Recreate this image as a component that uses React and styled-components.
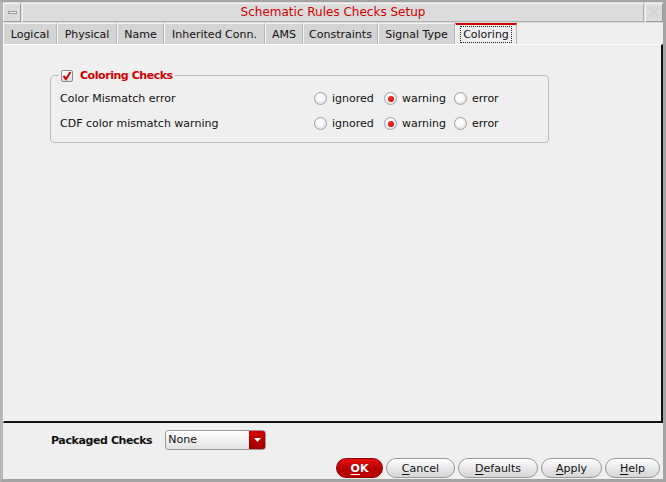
import React from "react";
import styled, { createGlobalStyle } from "styled-components";

const Global = createGlobalStyle`
  html, body { margin: 0; padding: 0; background: #efefef; }
  * { box-sizing: border-box; }
  body { font-family: "DejaVu Sans", Verdana, sans-serif; font-size: 11px; color: #111; }
`;

const Window = styled.div`
  width: 666px;
  height: 482px;
  display: flex;
  flex-direction: column;
  background: #efefef;
  border-style: solid;
  border-color: #a4a4a4;
  border-width: 2px 3px 3px 3px;
  border-left-color: #b6b6b6;
`;

const TitleBar = styled.div`
  height: 21px;
  display: flex;
  align-items: center;
  gap: 1px;
  padding: 0 0 1px 0;
  background: #dcdcdc;
`;

const FrameBtn = styled.div`
  width: 18px;
  height: 19px;
  display: flex;
  align-items: center;
  justify-content: center;
  border: 1px solid;
  border-color: #f6f6f6 #9c9c9c #9c9c9c #f6f6f6;
  background: #dcdcdc;
`;

const Dash = styled.div`
  width: 9px;
  height: 3px;
  border: 1px solid #9a9a9a;
  background: #f2f2f2;
`;

const Caption = styled.div`
  flex: 1;
  height: 19px;
  display: flex;
  align-items: center;
  justify-content: center;
  border: 1px solid;
  border-color: #f4f4f4 #b0b0b0 #b0b0b0 #f4f4f4;
  color: #d00000;
  font-size: 12px;
`;

const TabRow = styled.div`
  height: 21px;
  display: flex;
  align-items: stretch;
`;

const Tab = styled.div`
  width: ${(p) => p.$w}px;
  display: flex;
  align-items: center;
  justify-content: center;
  background: ${(p) => (p.$active ? "#efefef" : "#d4d4d4")};
  border-left: 1px solid #f8f8f8;
  border-right: 1px solid #b4b4b4;
  border-top: ${(p) => (p.$active ? "2px solid #cc0000" : "1px solid #f4f4f4")};
  font-size: 11px;
  color: #111;
`;

const TabText = styled.span`
  padding: 1px 2px;
  border: 1px dotted ${(p) => (p.$focus ? "#222" : "transparent")};
`;

const Panel = styled.div`
  flex: 1;
  border-top: 1px solid #ffffff;
  border-left: 1px solid #f8f8f8;
  border-right: 2px solid #111;
  border-bottom: 2px solid #111;
  padding: 24px 0 0 46px;
`;

const Group = styled.fieldset`
  width: 499px;
  margin: 0;
  padding: 4px 0 6px 9px;
  border: 1px solid #bcbcbc;
  border-radius: 4px;
`;

const Legend = styled.legend`
  margin-left: -1px;
  padding: 0 2px;
  display: flex;
  align-items: center;
  gap: 7px;
  height: 13px;
  color: #d00000;
  font-weight: bold;
  font-size: 11px;
  letter-spacing: -0.45px;
`;

const CheckBox = styled.span`
  width: 12px;
  height: 12px;
  border: 1px solid #8c8c8c;
  border-radius: 2px;
  background: linear-gradient(#ffffff, #dcdcdc);
  display: flex;
  align-items: center;
  justify-content: center;
`;

const Row = styled.div`
  height: 25px;
  display: grid;
  grid-template-columns: 254px auto;
  align-items: center;
`;

const Options = styled.div`
  display: flex;
  align-items: center;
`;

const Option = styled.label`
  width: 70px;
  display: flex;
  align-items: center;
  gap: 5px;
`;

const Radio = styled.span`
  width: 13px;
  height: 13px;
  border-radius: 50%;
  border: 1px solid #a2a2a2;
  background: radial-gradient(circle at 45% 40%, #ffffff 30%, #d2d2d2 100%);
  display: flex;
  align-items: center;
  justify-content: center;
  &::after {
    content: "";
    width: 6px;
    height: 6px;
    border-radius: 50%;
    background: ${(p) => (p.$on ? "radial-gradient(circle at 40% 35%, #ff3030, #b00000)" : "transparent")};
  }
`;

const Footer = styled.div`
  height: 56px;
  display: flex;
  flex-direction: column;
  padding-top: 7px;
`;

const PkgRow = styled.div`
  display: flex;
  align-items: center;
  gap: 13px;
  padding-left: 48px;
  height: 20px;
`;

const PkgLabel = styled.span`
  font-weight: bold;
  font-size: 11px;
  letter-spacing: -0.4px;
`;

const Combo = styled.div`
  width: 101px;
  height: 20px;
  display: flex;
  border: 1px solid #9a9a9a;
  border-radius: 3px;
  overflow: hidden;
  background: linear-gradient(#ffffff, #e2e2e2);
`;

const ComboText = styled.span`
  flex: 1;
  padding-left: 2px;
  line-height: 17px;
  font-size: 11px;
`;

const ComboArrow = styled.span`
  width: 16px;
  display: flex;
  align-items: center;
  justify-content: center;
  background: linear-gradient(#d60000, #9e0000);
`;

const Buttons = styled.div`
  display: flex;
  justify-content: flex-end;
  gap: 3px;
  margin-top: 8px;
  padding-right: 3px;
`;

const Button = styled.div`
  width: ${(p) => p.$w}px;
  height: 20px;
  display: flex;
  align-items: center;
  justify-content: center;
  border-radius: 10px;
  border: 1px solid ${(p) => (p.$primary ? "#8a0000" : "#9a9a9a")};
  background: ${(p) =>
    p.$primary
      ? "linear-gradient(#e81010, #b00000 60%, #c40000)"
      : "linear-gradient(#ffffff, #e6e6e6 55%, #d6d6d6)"};
  color: ${(p) => (p.$primary ? "#fff" : "#111")};
  font-weight: ${(p) => (p.$primary ? "bold" : "normal")};
  font-size: 11px;
  u { text-decoration-thickness: 1px; text-underline-offset: 2px; }
`;

const tabs = [
  ["Logical", 54],
  ["Physical", 60],
  ["Name", 47],
  ["Inherited Conn.", 101],
  ["AMS", 38],
  ["Constraints", 75],
  ["Signal Type", 77],
  ["Coloring", 62],
];

const rows = ["Color Mismatch error", "CDF color mismatch warning"];
const opts = ["ignored", "warning", "error"];

const buttons = [
  ["O", "K", 47, true],
  ["C", "ancel", 69],
  ["D", "efaults", 80],
  ["A", "pply", 61],
  ["H", "elp", 55],
];

export default function App() {
  return (
    <>
      <Global />
      <Window>
        <TitleBar>
          <FrameBtn>
            <Dash />
          </FrameBtn>
          <Caption>Schematic Rules Checks Setup</Caption>
          <FrameBtn>
            <svg width="12" height="12" viewBox="0 0 12 12">
              <path
                d="M2 1 L6 5 L10 1 M2 11 L6 7 L10 11 M1 2 L5 6 L1 10 M11 2 L7 6 L11 10"
                fill="none"
                stroke="#c4c4c4"
                strokeWidth="1"
                strokeDasharray="1 1"
              />
            </svg>
          </FrameBtn>
        </TitleBar>
        <TabRow>
          {tabs.map(([t, w]) => (
            <Tab key={t} $w={w} $active={t === "Coloring"}>
              <TabText $focus={t === "Coloring"}>{t}</TabText>
            </Tab>
          ))}
        </TabRow>
        <Panel>
          <Group>
            <Legend>
              <CheckBox>
                <svg width="10" height="10" viewBox="0 0 10 10">
                  <path d="M1.5 5 L4 8 L8.5 1" fill="none" stroke="#cc0000" strokeWidth="2" />
                </svg>
              </CheckBox>
              Coloring Checks
            </Legend>
            {rows.map((r) => (
              <Row key={r}>
                <span>{r}</span>
                <Options>
                  {opts.map((o) => (
                    <Option key={o}>
                      <Radio $on={o === "warning"} />
                      {o}
                    </Option>
                  ))}
                </Options>
              </Row>
            ))}
          </Group>
        </Panel>
        <Footer>
          <PkgRow>
            <PkgLabel>Packaged Checks</PkgLabel>
            <Combo>
              <ComboText>None</ComboText>
              <ComboArrow>
                <svg width="7" height="4" viewBox="0 0 7 4">
                  <path d="M0 0 H7 L3.5 4 Z" fill="#fff" />
                </svg>
              </ComboArrow>
            </Combo>
          </PkgRow>
          <Buttons>
            {buttons.map(([k, rest, w, primary]) => (
              <Button key={k} $w={w} $primary={primary}>
                <u>{k}</u>
                {rest}
              </Button>
            ))}
          </Buttons>
        </Footer>
      </Window>
    </>
  );
}
